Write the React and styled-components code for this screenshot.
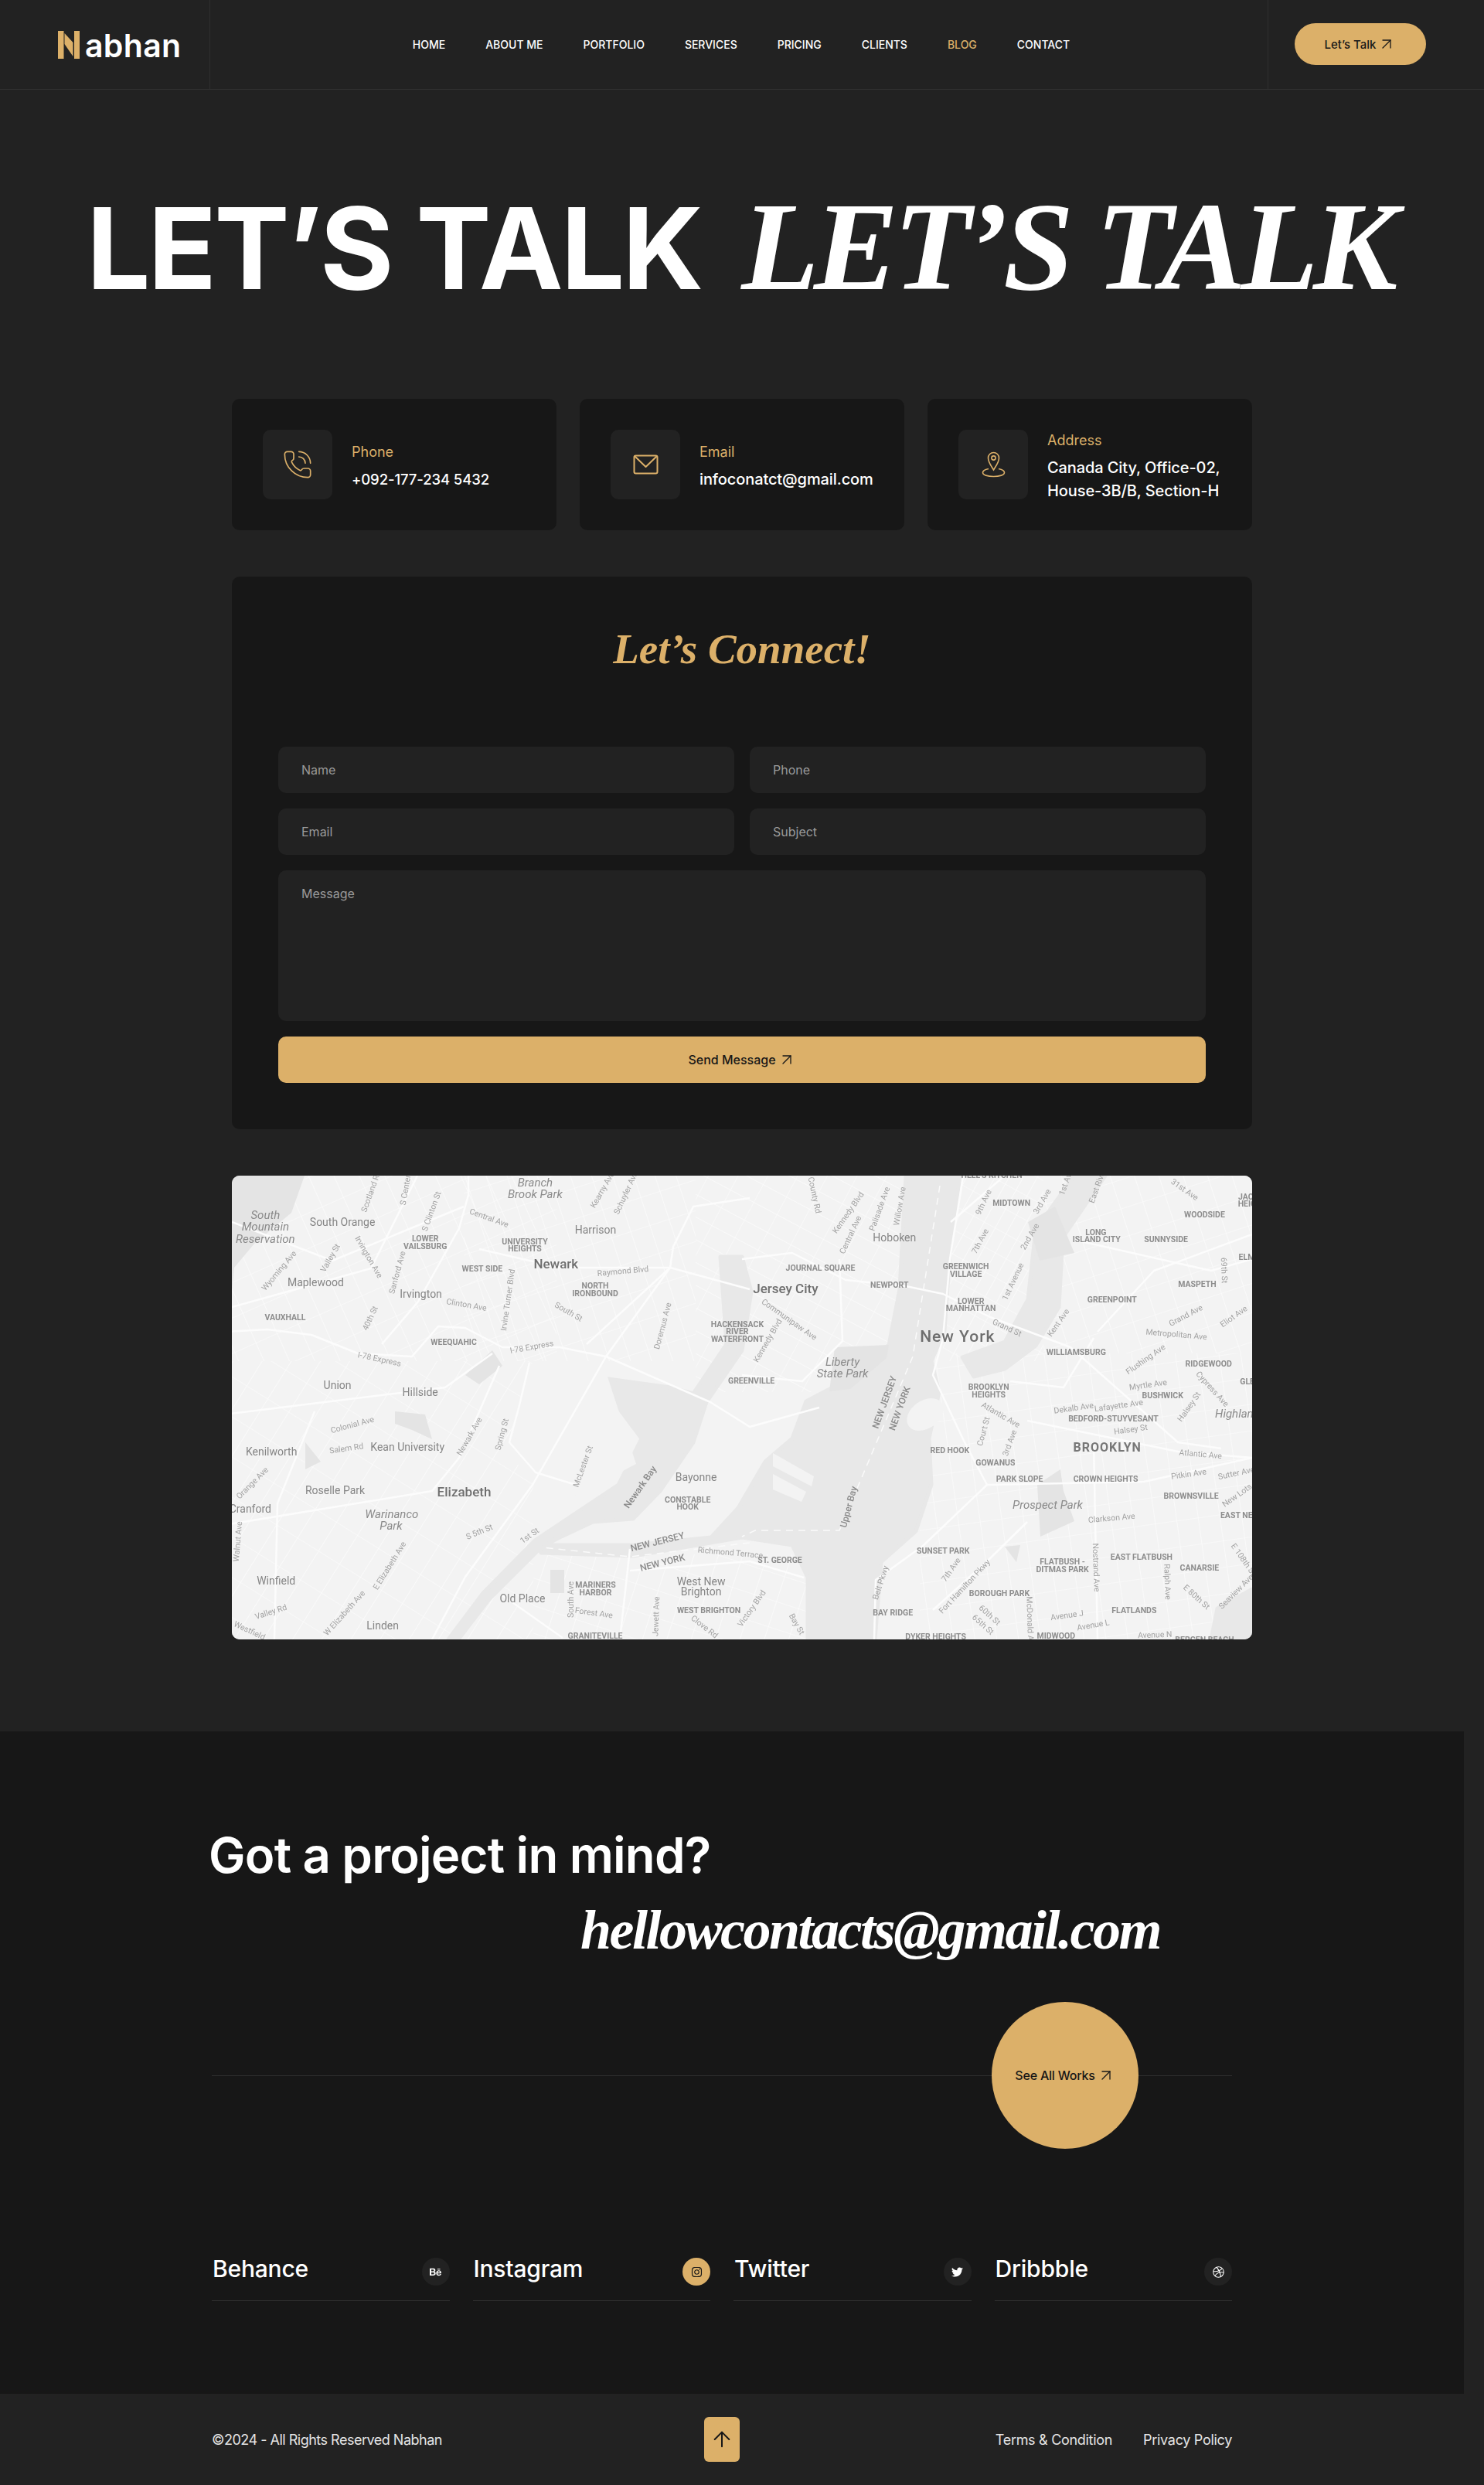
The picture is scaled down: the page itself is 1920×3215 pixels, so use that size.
import React from 'react'
import styled, { createGlobalStyle, css } from 'styled-components'
import { ArrowUpRight, ArrowUp, PhoneCall } from 'lucide-react'
import { FaBehance, FaInstagram, FaTwitter, FaDribbble } from 'react-icons/fa'

const GOLD = '#dcb069'
const DARK = '#171717'
const BG = '#222222'
const LINE = '#2f2f2f'

const GlobalStyle = createGlobalStyle`
  * { box-sizing: border-box; }
  body {
    margin: 0;
    background: ${BG};
    color: #fff;
    font-family: Inter, "Noto Sans", sans-serif;
  }
`

const Header = styled.header`
  display: flex;
  height: 116px;
  border-bottom: 1px solid #333;
`
const LogoCell = styled.div`
  width: 272px;
  display: flex;
  align-items: center;
  gap: 7px;
  padding: 0 0 0 75px;
  border-right: 1px solid #2e2e2e;
`
const LogoText = styled.span`
  font-size: 41px;
  font-weight: 600;
  letter-spacing: 0.3px;
  line-height: 1;
  margin-top: 3px;
`
const Nav = styled.nav`
  flex: 1;
  display: flex;
  align-items: center;
  justify-content: center;
  gap: 52px;
  padding-left: 6px;
`
const NavLink = styled.a`
  font-size: 14px;
  font-weight: 500;
  text-transform: uppercase;
  color: ${p => (p.$active ? GOLD : '#fff')};
`
const CtaCell = styled.div`
  width: 280px;
  display: flex;
  align-items: center;
  padding-left: 34px;
  border-left: 1px solid #2e2e2e;
`
const PillButton = styled.button`
  width: 170px;
  height: 54px;
  border: 0;
  border-radius: 27px;
  background: ${GOLD};
  color: ${DARK};
  display: flex;
  align-items: center;
  justify-content: center;
  gap: 2px;
  font: 500 15px Inter, sans-serif;
  margin-bottom: 1px;
`

const Hero = styled.section`
  height: 400px;
  display: flex;
  justify-content: center;
  align-items: baseline;
  gap: 52px;
  padding: 121px 6px 0 0;
  white-space: nowrap;
`
const HeroSans = styled.h1`
  margin: 0;
  font-size: 146px;
  line-height: 1;
  font-weight: 700;
  letter-spacing: -3px;
`
const HeroSerif = styled.span`
  font-family: "Liberation Serif", serif;
  font-style: italic;
  font-weight: 700;
  font-size: 164px;
  line-height: 1;
  letter-spacing: -6.4px;
`

const Main = styled.main`
  width: 1320px;
  margin: 0 auto;
  display: flex;
  flex-direction: column;
  gap: 60px;
`
const CardRow = styled.div`
  display: grid;
  grid-template-columns: repeat(3, 420px);
  gap: 30px;
`
const InfoCard = styled.div`
  height: 170px;
  background: ${DARK};
  border-radius: 10px;
  padding: 0 40px;
  display: flex;
  align-items: center;
  gap: 25px;
`
const IconBox = styled.div`
  width: 90px;
  height: 90px;
  flex: none;
  border-radius: 10px;
  background: ${BG};
  color: ${GOLD};
  display: flex;
  align-items: center;
  justify-content: center;
`
const InfoText = styled.div`
  margin-top: 5px;
`
const InfoLabel = styled.div`
  font-size: 18px;
  line-height: 24px;
  color: ${GOLD};
  margin-bottom: 8px;
`
const InfoValue = styled.div`
  font-size: ${p => (p.$digits ? '18.5px' : '20px')};
  line-height: 30px;
  font-weight: 500;
  letter-spacing: -0.1px;
  white-space: nowrap;
`

const FormPanel = styled.form`
  background: ${DARK};
  border-radius: 10px;
  padding: 60px;
  display: grid;
  grid-template-columns: 1fr 1fr;
  gap: 20px;
`
const FormTitle = styled.h2`
  grid-column: 1 / -1;
  margin: 0 0 72px;
  text-align: center;
  font-family: "Liberation Serif", serif;
  font-style: italic;
  font-weight: 700;
  font-size: 55px;
  line-height: 68px;
  color: ${GOLD};
`
const fieldStyles = css`
  width: 100%;
  border: 0;
  outline: 0;
  border-radius: 10px;
  background: ${BG};
  color: #fff;
  padding: 0 30px;
  font: 400 16px Inter, sans-serif;
  &::placeholder { color: #9a9a9a; opacity: 1; }
`
const Field = styled.input`
  ${fieldStyles}
  height: 60px;
`
const MessageField = styled.textarea`
  ${fieldStyles}
  grid-column: 1 / -1;
  height: 195px;
  padding-top: 20px;
  line-height: 20px;
  resize: none;
  display: block;
`
const SendButton = styled.button`
  grid-column: 1 / -1;
  height: 60px;
  border: 0;
  border-radius: 10px;
  background: ${GOLD};
  color: ${DARK};
  display: flex;
  align-items: center;
  justify-content: center;
  gap: 2px;
  font: 500 16px Inter, sans-serif;
`

const MapFrame = styled.div`
  height: 600px;
  border-radius: 10px;
  overflow: hidden;
  background: #f3f3f3;
  svg {
    display: block;
    filter: blur(0.4px);
  }
`
const labelKinds = {
  big: css`font-size: 17px; font-weight: 500; fill: #6e6e6e;`,
  town: css`font-size: 14px; fill: #858585;`,
  hood: css`font-size: 10.5px; font-weight: 700; fill: #8d8d8d;`,
  st: css`font-size: 10.5px; fill: #a3a3a3;`,
  park: css`font-size: 15px; font-style: italic; fill: #8a8a8a;`,
  state: css`font-size: 12px; font-weight: 500; fill: #8a8a8a;`,
  ny: css`font-size: 21px; font-weight: 500; letter-spacing: 1px; fill: #6e6e6e;`,
  bk: css`font-size: 16px; font-weight: 700; letter-spacing: 1px; fill: #777;`,
}
const MapLabel = styled.text`
  font-family: Roboto, sans-serif;
  text-anchor: middle;
  dominant-baseline: middle;
  ${p => labelKinds[p.$kind]}
`

const CtaSection = styled.section`
  width: 1894px;
  margin-top: 119px;
  background: ${DARK};
  padding: 122px 0 120px 274px;
`
const CtaInner = styled.div`
  width: 1320px;
`
const Question = styled.h2`
  margin: 0 0 0 -4px;
  font-size: 63.5px;
  line-height: 76px;
  font-weight: 600;
  letter-spacing: -0.8px;
`
const BigEmail = styled.div`
  margin: 18px 0 0 477px;
  font-family: "Liberation Serif", serif;
  font-style: italic;
  font-weight: 700;
  font-size: 72px;
  line-height: 82px;
  letter-spacing: -2.5px;
  white-space: nowrap;
`
const WorksRow = styled.div`
  display: flex;
  align-items: center;
  margin-top: 52px;
`
const Rule = styled.div`
  flex: ${p => (p.$fixed ? '0 0 121px' : '1')};
  height: 1px;
  background: ${LINE};
`
const WorksCircle = styled.a`
  width: 190px;
  height: 190px;
  flex: none;
  border-radius: 50%;
  background: ${GOLD};
  color: ${DARK};
  display: flex;
  align-items: center;
  justify-content: center;
  gap: 2px;
  font-size: 16px;
  font-weight: 500;
  letter-spacing: -0.2px;
`
const SocialGrid = styled.div`
  display: grid;
  grid-template-columns: repeat(4, 1fr);
  gap: 30px;
  margin-top: 141px;
`
const SocialItem = styled.a`
  display: flex;
  justify-content: space-between;
  align-items: center;
  padding-bottom: 19px;
  border-bottom: 1px solid ${LINE};
`
const SocialName = styled.span`
  font-size: 30px;
  font-weight: 500;
  letter-spacing: -0.2px;
  margin: -8px 0 0 1px;
`
const SocialIcon = styled.span`
  width: 36px;
  height: 36px;
  border-radius: 50%;
  display: flex;
  align-items: center;
  justify-content: center;
  font-size: 15px;
  background: ${p => (p.$active ? GOLD : BG)};
  color: ${p => (p.$active ? DARK : '#fff')};
`

const BottomBar = styled.footer`
  width: 1320px;
  height: 118px;
  margin-left: 274px;
  display: grid;
  grid-template-columns: 1fr auto 1fr;
  align-items: center;
  font-size: 18px;
  color: #e4e4e4;
`
const Copy = styled.span`
  letter-spacing: -0.5px;
`
const UpButton = styled.button`
  width: 46px;
  height: 58px;
  padding: 0;
  border: 0;
  border-radius: 6px;
  background: ${GOLD};
  color: ${DARK};
  display: flex;
  align-items: center;
  justify-content: center;
`
const LegalLinks = styled.div`
  display: flex;
  justify-content: flex-end;
  gap: 40px;
  letter-spacing: -0.3px;
`

const LogoMark = () => (
  <svg width="28" height="36" viewBox="0 0 28 36">
    <rect x="0" y="0" width="7.5" height="36" fill={GOLD} />
    <rect x="21" y="0" width="7" height="36" fill={GOLD} />
    <polygon points="8.5,3 19.5,15 19.5,33 8.5,17" fill={GOLD} />
  </svg>
)

const MailIcon = () => (
  <svg width="33" height="26" viewBox="0 0 33 26" fill="none" stroke="currentColor" strokeWidth="2" strokeLinejoin="round">
    <rect x="1.5" y="1.5" width="30" height="23" rx="2" />
    <path d="M2 2 L16.5 16 L31 2" />
  </svg>
)

const PinIcon = () => (
  <svg width="31" height="34" viewBox="0 0 31 34" fill="none" stroke="currentColor" strokeWidth="1.6">
    <path d="M15.5 24 C12 18 8.5 14 8.5 8.5 A7 7 0 0 1 22.5 8.5 C22.5 14 19 18 15.5 24 Z" />
    <circle cx="15.5" cy="8.5" r="2.6" />
    <path d="M9 22.5 C4 23.5 1.5 25.5 1.5 27.5 C1.5 30.5 8 32.5 15.5 32.5 C23 32.5 29.5 30.5 29.5 27.5 C29.5 25.5 27 23.5 22 22.5" />
  </svg>
)

// [text, x, y, kind, rotation] x/y measured on the left half of the map, scaled below
const westLabels = [
  ['Branch', 928, 52, 'park'], ['Brook Park', 928, 90, 'park'],
  ['South', 123, 160, 'park'], ['Mountain', 123, 198, 'park'], ['Reservation', 123, 237, 'park'],
  ['South Orange', 353, 183, 'town'], ['LOWER', 600, 236, 'hood'], ['VAILSBURG', 600, 260, 'hood'],
  ['UNIVERSITY', 897, 245, 'hood'], ['HEIGHTS', 897, 269, 'hood'], ['Harrison', 1108, 207, 'town'],
  ['Central Ave', 790, 168, 'st', 20], ['S Clinton St', 620, 145, 'st', -70], ['Scotland Rd', 440, 80, 'st', -70],
  ['S Center St', 545, 60, 'st', -80], ['Kearny Ave', 1130, 75, 'st', -60], ['Schuyler Ave', 1200, 85, 'st', -65],
  ['Valley St', 318, 298, 'st', -60], ['Wyoming Ave', 165, 340, 'st', -50], ['Irvington Ave', 430, 295, 'st', 60],
  ['Sanford Ave', 518, 345, 'st', -75], ['WEST SIDE', 770, 334, 'hood'], ['Newark', 990, 320, 'big'],
  ['Raymond Blvd', 1190, 342, 'st', -5], ['NORTH', 1107, 390, 'hood'], ['IRONBOUND', 1107, 415, 'hood'],
  ['Maplewood', 273, 380, 'town'], ['Irvington', 587, 419, 'town'], ['Irvine Turner Blvd', 848, 435, 'st', -82],
  ['Clinton Ave', 723, 452, 'st', 10], ['South St', 1027, 475, 'st', 30], ['Doremus Ave', 1310, 520, 'st', -75],
  ['VAUXHALL', 182, 494, 'hood'], ['40th St', 437, 495, 'st', -65], ['WEEQUAHIC', 685, 575, 'hood'],
  ['I-78 Express', 463, 630, 'st', 12], ['I-78 Express', 918, 590, 'st', -10],
  ['HACKENSACK', 1531, 516, 'hood'], ['RIVER', 1531, 540, 'hood'], ['WATERFRONT', 1531, 564, 'hood'],
  ['GREENVILLE', 1573, 702, 'hood'], ['Union', 338, 716, 'town'], ['Hillside', 585, 738, 'town'],
  ['Colonial Ave', 383, 845, 'st', -15], ['Salem Rd', 365, 922, 'st', -8], ['Kean University', 547, 920, 'town'],
  ['Newark Ave', 733, 882, 'st', -60], ['Spring St', 830, 875, 'st', -75], ['Kenilworth', 141, 935, 'town'],
  ['Orange Ave', 85, 1035, 'st', -45], ['Roselle Park', 331, 1060, 'town'], ['Elizabeth', 716, 1066, 'big'],
  ['McLester St', 1072, 980, 'st', -70], ['Newark Bay', 1243, 1048, 'state', -55], ['Bayonne', 1408, 1017, 'town'],
  ['CONSTABLE', 1383, 1090, 'hood'], ['HOOK', 1383, 1114, 'hood'], ['Cranford', 78, 1122, 'town'],
  ['Warinanco', 500, 1137, 'park'], ['Park', 498, 1175, 'park'], ['S 5th St', 762, 1195, 'st', -22],
  ['1st St', 912, 1207, 'st', -35], ['Walnut Ave', 42, 1225, 'st', -85], ['E Elizabeth Ave', 495, 1305, 'st', -58],
  ['NEW JERSEY', 1293, 1228, 'state', -14], ['NEW YORK', 1308, 1296, 'state', -14], ['Richmond Terrace', 1510, 1263, 'st', 5],
  ['West New', 1423, 1360, 'town'], ['Brighton', 1423, 1392, 'town'], ['MARINERS', 1108, 1369, 'hood'], ['HARBOR', 1108, 1393, 'hood'],
  ['South Ave', 1035, 1415, 'st', -90], ['Forest Ave', 1103, 1460, 'st', 8], ['Jewett Ave', 1290, 1470, 'st', -88],
  ['WEST BRIGHTON', 1446, 1451, 'hood'], ['Old Place', 890, 1415, 'town'], ['Winfield', 155, 1356, 'town'],
  ['Valley Rd', 140, 1457, 'st', -18], ['Linden', 473, 1502, 'town'], ['W Elizabeth Ave', 360, 1460, 'st', -48],
  ['Clove Rd', 1432, 1505, 'st', 38], ['GRANITEVILLE', 1107, 1536, 'hood'], ['Westfield', 75, 1518, 'st', 25],
]

// same, measured on the right half
const eastLabels = [
  ["HELL'S KITCHEN", 745, 28, 'hood'], ['County Rd', 215, 92, 'st', 78], ['Kennedy Blvd', 318, 150, 'st', -55],
  ['Central Ave', 325, 222, 'st', -65], ['Palisade Ave', 412, 137, 'st', -70], ['Willow Ave', 472, 128, 'st', -80],
  ['Hoboken', 455, 233, 'town'], ['9th Ave', 722, 115, 'st', -65], ['MIDTOWN', 804, 119, 'hood'], ['3rd Ave', 897, 113, 'st', -60],
  ['1st Ave', 968, 50, 'st', -70], ['East River', 1062, 62, 'st', -70], ['31st Ave', 1320, 75, 'st', 35],
  ['JACKSON', 1535, 98, 'hood'], ['HEIGHTS', 1530, 122, 'hood'], ['WOODSIDE', 1380, 158, 'hood'],
  ['LONG', 1056, 215, 'hood'], ['ISLAND CITY', 1058, 239, 'hood'], ['SUNNYSIDE', 1265, 239, 'hood'],
  ['2nd Ave', 860, 228, 'st', -60], ['7th Ave', 712, 243, 'st', -62], ['JOURNAL SQUARE', 234, 331, 'hood'],
  ['GREENWICH', 668, 328, 'hood'], ['VILLAGE', 668, 353, 'hood'], ['69th St', 1437, 338, 'st', 88], ['ELMHURST', 1545, 296, 'hood'],
  ['MASPETH', 1358, 385, 'hood'], ['NEWPORT', 440, 388, 'hood'], ['Jersey City', 130, 400, 'big'], ['1st Avenue', 810, 375, 'st', -65],
  ['LOWER', 683, 440, 'hood'], ['MANHATTAN', 683, 464, 'hood'], ['GREENPOINT', 1104, 435, 'hood'],
  ['Communipaw Ave', 140, 500, 'st', 35], ['Grand St', 790, 527, 'st', 25], ['Kent Ave', 945, 510, 'st', -55],
  ['Grand Ave', 1325, 487, 'st', -28], ['Eliot Ave', 1468, 490, 'st', -35], ['Metropolitan Ave', 1296, 549, 'st', 5],
  ['Kennedy Blvd', 78, 568, 'st', -60], ['New York', 643, 558, 'ny'], ['WILLIAMSBURG', 997, 607, 'hood'],
  ['Flushing Ave', 1205, 630, 'st', -35], ['RIDGEWOOD', 1392, 645, 'hood'], ['GLENDALE', 1545, 703, 'hood'],
  ['Liberty', 300, 640, 'park'], ['State Park', 300, 678, 'park'], ['Myrtle Ave', 1212, 714, 'st', -8],
  ['BROOKLYN', 736, 721, 'hood'], ['HEIGHTS', 736, 746, 'hood'], ['BUSHWICK', 1255, 749, 'hood'],
  ['Cypress Ave', 1402, 727, 'st', 48], ['NEW JERSEY', 427, 770, 'state', -70], ['NEW YORK', 472, 790, 'state', -70],
  ['Atlantic Ave', 771, 812, 'st', 30], ['Dekalb Ave', 990, 790, 'st', -8], ['Lafayette Ave', 1124, 782, 'st', -8],
  ['BEDFORD-STUYVESANT', 1108, 824, 'hood'], ['Halsey St', 1160, 860, 'st', -8], ['Halsey St', 1335, 785, 'st', -55],
  ['Highland', 1478, 810, 'park'], ['Court St', 722, 865, 'st', -75], ['3rd Ave', 800, 903, 'st', -70],
  ['RED HOOK', 620, 928, 'hood'], ['BROOKLYN', 1090, 919, 'bk'], ['Atlantic Ave', 1368, 941, 'st', 5],
  ['GOWANUS', 756, 968, 'hood'], ['PARK SLOPE', 828, 1022, 'hood'], ['CROWN HEIGHTS', 1085, 1022, 'hood'],
  ['Pitkin Ave', 1333, 1006, 'st', -8], ['Sutter Ave', 1475, 1003, 'st', -12], ['BROWNSVILLE', 1340, 1077, 'hood'],
  ['New Lots', 1478, 1075, 'st', -35], ['Upper Bay', 320, 1112, 'state', -75], ['Prospect Park', 912, 1107, 'park'],
  ['Clarkson Ave', 1103, 1150, 'st', -5], ['EAST NEW YORK', 1520, 1141, 'hood'], ['SUNSET PARK', 600, 1258, 'hood'],
  ['ST. GEORGE', 113, 1288, 'hood'], ['EAST FLATBUSH', 1192, 1277, 'hood'], ['FLATBUSH -', 956, 1293, 'hood'],
  ['DITMAS PARK', 956, 1318, 'hood'], ['CANARSIE', 1365, 1312, 'hood'], ['E 108th St', 1495, 1285, 'st', 55],
  ['Nostrand Ave', 1055, 1310, 'st', 88], ['Ralph Ave', 1268, 1357, 'st', 88], ['7th Ave', 625, 1318, 'st', -55],
  ['Belt Pkwy', 415, 1360, 'st', -72], ['Fort Hamilton Pkwy', 665, 1373, 'st', -47], ['BOROUGH PARK', 768, 1396, 'hood'],
  ['E 80th St', 1355, 1408, 'st', 42], ['Seaview Ave', 1475, 1390, 'st', -45], ['Avenue J', 970, 1468, 'st', -8],
  ['FLATLANDS', 1170, 1453, 'hood'], ['BAY RIDGE', 450, 1459, 'hood'], ['60th St', 738, 1467, 'st', 42],
  ['65th St', 718, 1498, 'st', 42], ['McDonald Ave', 858, 1490, 'st', 88], ['Victory Blvd', 30, 1445, 'st', -55],
  ['Bay St', 162, 1496, 'st', 60], ['Avenue L', 1048, 1500, 'st', -10], ['Avenue N', 1232, 1532, 'st', -2],
  ['MIDWOOD', 937, 1535, 'hood'], ['DYKER HEIGHTS', 578, 1537, 'hood'], ['BERGEN BEACH', 1380, 1548, 'hood'],
]

const labels = [
  ...westLabels.map(([t, x, y, k, r]) => [t, x / 2.306 - 10, y / 2.529 - 11, k, r]),
  ...eastLabels.map(([t, x, y, k, r]) => [t, x / 2.306 + 660, y / 2.529 - 11, k, r]),
]

// street grids: each district of the map runs at its own angle
const districts = [
  { id: 'nw', x: 0, y: 0, w: 420, h: 240, cell: [30, 42], angle: -24 },
  { id: 'sw', x: 0, y: 240, w: 390, h: 360, cell: [32, 44], angle: 32 },
  { id: 'newark', x: 300, y: 0, w: 300, h: 240, cell: [26, 38], angle: -18 },
  { id: 'jc', x: 600, y: 0, w: 270, h: 280, cell: [26, 34], angle: -62 },
  { id: 'staten', x: 390, y: 490, w: 360, h: 110, cell: [30, 34], angle: 18 },
  { id: 'manhattan', x: 920, y: 0, w: 130, h: 240, cell: [16, 28], angle: 29 },
  { id: 'queens', x: 1050, y: 0, w: 270, h: 230, cell: [30, 36], angle: -18 },
  { id: 'brooklyn', x: 890, y: 230, w: 430, h: 370, cell: [28, 34], angle: -8 },
]
const waterShapes = [
  '872,0 942,0 929,100 922,200 905,240 915,280 902,340 905,400 885,460 840,500 832,600 745,600 745,520 725,478 660,468 520,492 400,488 398,478 520,478 620,468 655,430 690,370 725,340 743,292 800,262 850,219 864,147',
  '480,262 567,274 597,282 640,218 632,105 660,105 672,150 660,226 614,293 597,345 554,408 519,444 467,448 420,470 398,483 333,548 293,600 280,600 325,540 392,472 440,440 500,400 530,340 500,300',
  '1090,0 1130,0 1075,80 1070,170 1040,220 1000,250 960,260 945,235 1000,215 1030,160 1040,70',
  '1267,600 1275,560 1320,535 1320,600',
]
const parkShapes = [
  '0,0 94,0 77,48 29,88 3,119 0,150',
  '302,258 337,226 350,246 320,270',
  '1042,400 1072,380 1076,408 1090,447 1046,467',
  '211,305 250,309 259,341 233,329 211,321',
  '780,222 850,219 847,236 800,276 773,279',
  '95,345 115,370 95,380',
  '412,510 430,510 430,540 412,540',
  '1000,480 1020,478 1015,500',
  '1030,60 1065,40 1090,100 1045,110',
]
const landShapes = [
  '389,242 480,242 523,373 424,424 372,384 363,317',
  '700,359 753,389 750,402 700,376',
  '700,386 743,409 737,422 700,406',
]
const majorRoads = [
  '-10,202 46,199 103,206 163,230 233,234 267,195 302,197 350,222 424,222 484,234 619,293 670,325 760,300',
  '567,119 484,234 389,400 302,519 259,600',
  '306,0 306,25 294,68 241,163 194,218',
  '670,29 597,40 571,92 567,119 670,147',
  '567,119 424,119 320,95',
  '567,119 459,218',
  '-10,309 120,293 276,274 337,230',
  '346,246 294,365 259,408 -10,452',
  '385,242 372,297 359,345 393,384 445,400',
  '107,305 59,424 55,600',
  '350,543 428,598',
  '515,483 502,600',
  '515,511 670,499 740,520',
  '660,108 725,100 794,135 872,143 920,153 981,183 1085,222 1224,345 1280,353',
  '946,1 929,108 920,210 907,258 946,341 977,400 894,479 833,523 831,600',
  '660,258 738,266 790,214 786,108',
  '1094,84 1267,123 1320,108',
  '1120,202 1193,123 1320,76',
  '977,400 1180,396 1320,365',
  '1029,317 1224,357 1320,365',
  '1115,345 1120,600',
  '907,562 977,499 1029,448',
  '1007,266 1076,274 1115,210',
  '930,60 1000,0',
  '240,0 180,120 0,170',
  '0,60 130,110 300,40',
]

const CityMap = () => (
  <svg width="1320" height="600" viewBox="0 0 1320 600">
    <defs>
      {districts.map(d => (
        <pattern
          key={d.id}
          id={`streets-${d.id}`}
          width={d.cell[0]}
          height={d.cell[1]}
          patternUnits="userSpaceOnUse"
          patternTransform={`rotate(${d.angle})`}
        >
          <path d={`M0 0H${d.cell[0]}M0 0V${d.cell[1]}`} stroke="#fdfdfd" strokeWidth="1.2" fill="none" />
        </pattern>
      ))}
    </defs>
    <rect width="1320" height="600" fill="#f3f3f3" />
    {districts.map(d => (
      <rect key={d.id} x={d.x} y={d.y} width={d.w} height={d.h} fill={`url(#streets-${d.id})`} />
    ))}
    {waterShapes.map(points => (
      <polygon key={points} points={points} fill="#e8e8e8" stroke="#e8e8e8" strokeWidth="5" strokeLinejoin="round" />
    ))}
    {landShapes.map(points => <polygon key={points} points={points} fill="#f3f3f3" />)}
    {parkShapes.map(points => <polygon key={points} points={points} fill="#e4e4e4" />)}
    <ellipse cx="897" cy="309" rx="26" ry="18" transform="rotate(-35 897 309)" fill="#f3f3f3" />
    {majorRoads.map(points => (
      <polyline key={points} points={points} fill="none" stroke="#fcfcfc" strokeWidth="2.5" strokeLinejoin="round" />
    ))}
    <polyline points="916,13 881,234 786,459 677,459 660,467" fill="none" stroke="#fafafa" strokeWidth="1.5" strokeDasharray="9 7" />
    <polyline points="670,475 515,493 402,481" fill="none" stroke="#fafafa" strokeWidth="1.5" strokeDasharray="9 7" />
    {labels.map(([text, x, y, kind, rot]) => (
      <MapLabel
        key={`${text}-${x}`}
        x={x}
        y={y}
        $kind={kind}
        transform={rot ? `rotate(${rot} ${x} ${y})` : undefined}
      >
        {text}
      </MapLabel>
    ))}
  </svg>
)

const navItems = ['Home', 'About Me', 'Portfolio', 'Services', 'Pricing', 'Clients', 'Blog', 'Contact']

const socials = [
  { name: 'Behance', icon: <FaBehance /> },
  { name: 'Instagram', icon: <FaInstagram />, active: true },
  { name: 'Twitter', icon: <FaTwitter /> },
  { name: 'Dribbble', icon: <FaDribbble /> },
]

const App = () => (
  <>
    <GlobalStyle />
    <Header>
      <LogoCell>
        <LogoMark />
        <LogoText>abhan</LogoText>
      </LogoCell>
      <Nav>
        {navItems.map(item => (
          <NavLink key={item} $active={item === 'Blog'}>{item}</NavLink>
        ))}
      </Nav>
      <CtaCell>
        <PillButton type="button">
          Let’s Talk <ArrowUpRight size={24} strokeWidth={1.3} />
        </PillButton>
      </CtaCell>
    </Header>

    <Hero>
      <HeroSans>LET’S TALK</HeroSans>
      <HeroSerif>LET’S TALK</HeroSerif>
    </Hero>

    <Main>
      <CardRow>
        <InfoCard>
          <IconBox><PhoneCall size={40} strokeWidth={1} /></IconBox>
          <InfoText>
            <InfoLabel>Phone</InfoLabel>
            <InfoValue $digits>+092-177-234 5432</InfoValue>
          </InfoText>
        </InfoCard>
        <InfoCard>
          <IconBox><MailIcon /></IconBox>
          <InfoText>
            <InfoLabel>Email</InfoLabel>
            <InfoValue>infoconatct@gmail.com</InfoValue>
          </InfoText>
        </InfoCard>
        <InfoCard>
          <IconBox><PinIcon /></IconBox>
          <InfoText>
            <InfoLabel>Address</InfoLabel>
            <InfoValue>Canada City, Office-02,<br />House-3B/B, Section-H</InfoValue>
          </InfoText>
        </InfoCard>
      </CardRow>

      <FormPanel>
        <FormTitle>Let’s Connect!</FormTitle>
        <Field placeholder="Name" />
        <Field placeholder="Phone" />
        <Field placeholder="Email" />
        <Field placeholder="Subject" />
        <MessageField placeholder="Message" />
        <SendButton type="button">
          Send Message <ArrowUpRight size={24} strokeWidth={1.3} />
        </SendButton>
      </FormPanel>

      <MapFrame>
        <CityMap />
      </MapFrame>
    </Main>

    <CtaSection>
      <CtaInner>
        <Question>Got a project in mind?</Question>
        <BigEmail>hellowcontacts@gmail.com</BigEmail>
        <WorksRow>
          <Rule />
          <WorksCircle>
            See All Works <ArrowUpRight size={24} strokeWidth={1.3} />
          </WorksCircle>
          <Rule $fixed />
        </WorksRow>
        <SocialGrid>
          {socials.map(s => (
            <SocialItem key={s.name}>
              <SocialName>{s.name}</SocialName>
              <SocialIcon $active={s.active}>{s.icon}</SocialIcon>
            </SocialItem>
          ))}
        </SocialGrid>
      </CtaInner>
    </CtaSection>

    <BottomBar>
      <Copy>©2024 - All Rights Reserved Nabhan</Copy>
      <UpButton type="button"><ArrowUp size={32} strokeWidth={1.5} /></UpButton>
      <LegalLinks>
        <span>Terms &amp; Condition</span>
        <span>Privacy Policy</span>
      </LegalLinks>
    </BottomBar>
  </>
)

export default App
